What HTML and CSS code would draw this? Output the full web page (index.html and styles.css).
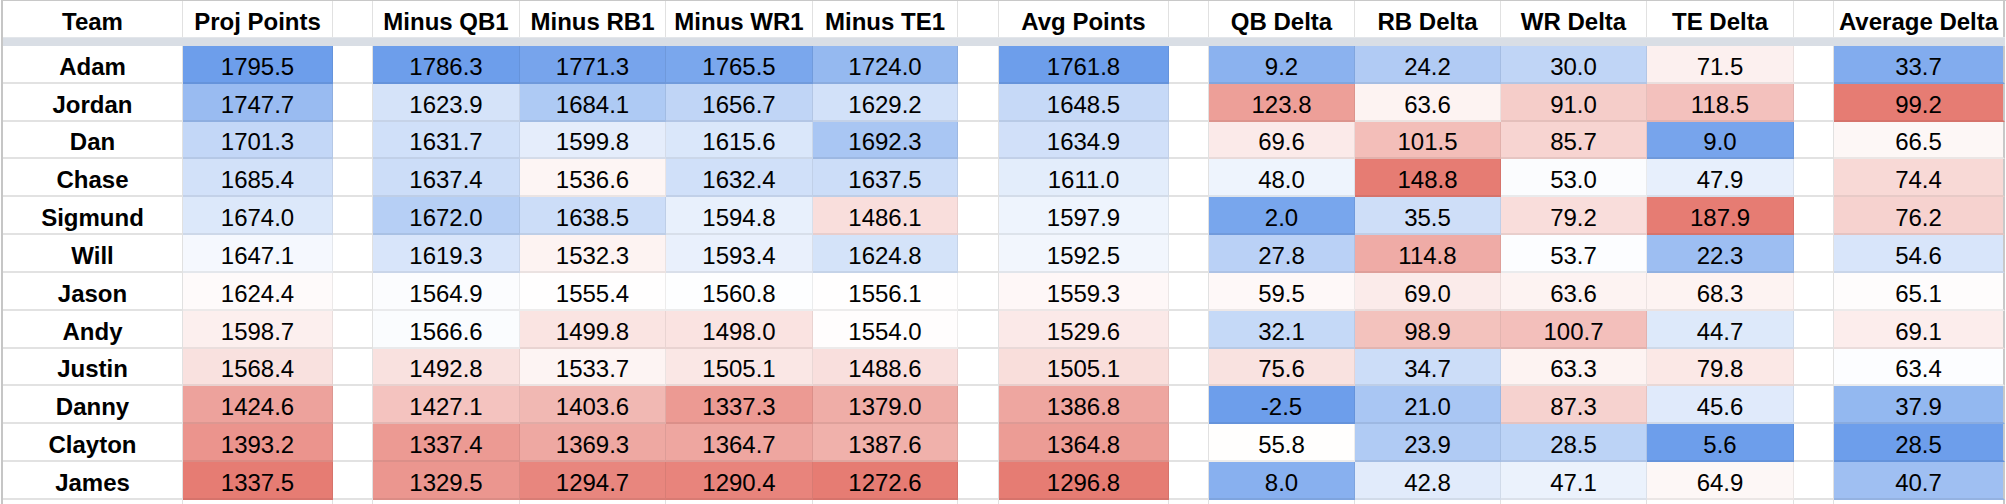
FILE: index.html
```html
<!DOCTYPE html>
<html lang="en">
<head>
<meta charset="utf-8">
<title>Team Deltas</title>
<link rel="stylesheet" href="styles.css">
</head>
<body>
<div class="sheet">
  <div class="c h">Team</div><div class="c h">Proj Points</div><div class="c h"></div><div class="c h">Minus QB1</div><div class="c h">Minus RB1</div><div class="c h">Minus WR1</div><div class="c h">Minus TE1</div><div class="c h"></div><div class="c h">Avg Points</div><div class="c h"></div><div class="c h">QB Delta</div><div class="c h">RB Delta</div><div class="c h">WR Delta</div><div class="c h">TE Delta</div><div class="c h"></div><div class="c h last">Average Delta</div>
  <div class="band"></div>

  <div class="c name">Adam</div><div class="c n" data-g="proj">1795.5</div><div class="c"></div><div class="c n" data-g="minus">1786.3</div><div class="c n" data-g="minus">1771.3</div><div class="c n" data-g="minus">1765.5</div><div class="c n" data-g="minus">1724.0</div><div class="c"></div><div class="c n" data-g="avg">1761.8</div><div class="c"></div><div class="c n" data-g="delta">9.2</div><div class="c n" data-g="delta">24.2</div><div class="c n" data-g="delta">30.0</div><div class="c n" data-g="te">71.5</div><div class="c"></div><div class="c n last" data-g="avgd">33.7</div>

  <div class="c name">Jordan</div><div class="c n" data-g="proj">1747.7</div><div class="c"></div><div class="c n" data-g="minus">1623.9</div><div class="c n" data-g="minus">1684.1</div><div class="c n" data-g="minus">1656.7</div><div class="c n" data-g="minus">1629.2</div><div class="c"></div><div class="c n" data-g="avg">1648.5</div><div class="c"></div><div class="c n" data-g="delta">123.8</div><div class="c n" data-g="delta">63.6</div><div class="c n" data-g="delta">91.0</div><div class="c n" data-g="te">118.5</div><div class="c"></div><div class="c n last" data-g="avgd">99.2</div>

  <div class="c name">Dan</div><div class="c n" data-g="proj">1701.3</div><div class="c"></div><div class="c n" data-g="minus">1631.7</div><div class="c n" data-g="minus">1599.8</div><div class="c n" data-g="minus">1615.6</div><div class="c n" data-g="minus">1692.3</div><div class="c"></div><div class="c n" data-g="avg">1634.9</div><div class="c"></div><div class="c n" data-g="delta">69.6</div><div class="c n" data-g="delta">101.5</div><div class="c n" data-g="delta">85.7</div><div class="c n" data-g="te">9.0</div><div class="c"></div><div class="c n last" data-g="avgd">66.5</div>

  <div class="c name">Chase</div><div class="c n" data-g="proj">1685.4</div><div class="c"></div><div class="c n" data-g="minus">1637.4</div><div class="c n" data-g="minus">1536.6</div><div class="c n" data-g="minus">1632.4</div><div class="c n" data-g="minus">1637.5</div><div class="c"></div><div class="c n" data-g="avg">1611.0</div><div class="c"></div><div class="c n" data-g="delta">48.0</div><div class="c n" data-g="delta">148.8</div><div class="c n" data-g="delta">53.0</div><div class="c n" data-g="te">47.9</div><div class="c"></div><div class="c n last" data-g="avgd">74.4</div>

  <div class="c name">Sigmund</div><div class="c n" data-g="proj">1674.0</div><div class="c"></div><div class="c n" data-g="minus">1672.0</div><div class="c n" data-g="minus">1638.5</div><div class="c n" data-g="minus">1594.8</div><div class="c n" data-g="minus">1486.1</div><div class="c"></div><div class="c n" data-g="avg">1597.9</div><div class="c"></div><div class="c n" data-g="delta">2.0</div><div class="c n" data-g="delta">35.5</div><div class="c n" data-g="delta">79.2</div><div class="c n" data-g="te">187.9</div><div class="c"></div><div class="c n last" data-g="avgd">76.2</div>

  <div class="c name">Will</div><div class="c n" data-g="proj">1647.1</div><div class="c"></div><div class="c n" data-g="minus">1619.3</div><div class="c n" data-g="minus">1532.3</div><div class="c n" data-g="minus">1593.4</div><div class="c n" data-g="minus">1624.8</div><div class="c"></div><div class="c n" data-g="avg">1592.5</div><div class="c"></div><div class="c n" data-g="delta">27.8</div><div class="c n" data-g="delta">114.8</div><div class="c n" data-g="delta">53.7</div><div class="c n" data-g="te">22.3</div><div class="c"></div><div class="c n last" data-g="avgd">54.6</div>

  <div class="c name">Jason</div><div class="c n" data-g="proj">1624.4</div><div class="c"></div><div class="c n" data-g="minus">1564.9</div><div class="c n" data-g="minus">1555.4</div><div class="c n" data-g="minus">1560.8</div><div class="c n" data-g="minus">1556.1</div><div class="c"></div><div class="c n" data-g="avg">1559.3</div><div class="c"></div><div class="c n" data-g="delta">59.5</div><div class="c n" data-g="delta">69.0</div><div class="c n" data-g="delta">63.6</div><div class="c n" data-g="te">68.3</div><div class="c"></div><div class="c n last" data-g="avgd">65.1</div>

  <div class="c name">Andy</div><div class="c n" data-g="proj">1598.7</div><div class="c"></div><div class="c n" data-g="minus">1566.6</div><div class="c n" data-g="minus">1499.8</div><div class="c n" data-g="minus">1498.0</div><div class="c n" data-g="minus">1554.0</div><div class="c"></div><div class="c n" data-g="avg">1529.6</div><div class="c"></div><div class="c n" data-g="delta">32.1</div><div class="c n" data-g="delta">98.9</div><div class="c n" data-g="delta">100.7</div><div class="c n" data-g="te">44.7</div><div class="c"></div><div class="c n last" data-g="avgd">69.1</div>

  <div class="c name">Justin</div><div class="c n" data-g="proj">1568.4</div><div class="c"></div><div class="c n" data-g="minus">1492.8</div><div class="c n" data-g="minus">1533.7</div><div class="c n" data-g="minus">1505.1</div><div class="c n" data-g="minus">1488.6</div><div class="c"></div><div class="c n" data-g="avg">1505.1</div><div class="c"></div><div class="c n" data-g="delta">75.6</div><div class="c n" data-g="delta">34.7</div><div class="c n" data-g="delta">63.3</div><div class="c n" data-g="te">79.8</div><div class="c"></div><div class="c n last" data-g="avgd">63.4</div>

  <div class="c name">Danny</div><div class="c n" data-g="proj">1424.6</div><div class="c"></div><div class="c n" data-g="minus">1427.1</div><div class="c n" data-g="minus">1403.6</div><div class="c n" data-g="minus">1337.3</div><div class="c n" data-g="minus">1379.0</div><div class="c"></div><div class="c n" data-g="avg">1386.8</div><div class="c"></div><div class="c n" data-g="delta">-2.5</div><div class="c n" data-g="delta">21.0</div><div class="c n" data-g="delta">87.3</div><div class="c n" data-g="te">45.6</div><div class="c"></div><div class="c n last" data-g="avgd">37.9</div>

  <div class="c name">Clayton</div><div class="c n" data-g="proj">1393.2</div><div class="c"></div><div class="c n" data-g="minus">1337.4</div><div class="c n" data-g="minus">1369.3</div><div class="c n" data-g="minus">1364.7</div><div class="c n" data-g="minus">1387.6</div><div class="c"></div><div class="c n" data-g="avg">1364.8</div><div class="c"></div><div class="c n" data-g="delta">55.8</div><div class="c n" data-g="delta">23.9</div><div class="c n" data-g="delta">28.5</div><div class="c n" data-g="te">5.6</div><div class="c"></div><div class="c n last" data-g="avgd">28.5</div>

  <div class="c name">James</div><div class="c n" data-g="proj">1337.5</div><div class="c"></div><div class="c n" data-g="minus">1329.5</div><div class="c n" data-g="minus">1294.7</div><div class="c n" data-g="minus">1290.4</div><div class="c n" data-g="minus">1272.6</div><div class="c"></div><div class="c n" data-g="avg">1296.8</div><div class="c"></div><div class="c n" data-g="delta">8.0</div><div class="c n" data-g="delta">42.8</div><div class="c n" data-g="delta">47.1</div><div class="c n" data-g="te">64.9</div><div class="c"></div><div class="c n last" data-g="avgd">40.7</div>

  <div class="c"></div><div class="c"></div><div class="c"></div><div class="c"></div><div class="c"></div><div class="c"></div><div class="c"></div><div class="c"></div><div class="c"></div><div class="c"></div><div class="c"></div><div class="c"></div><div class="c"></div><div class="c"></div><div class="c"></div><div class="c last"></div>
</div>
<script src="script.js"></script>
</body>
</html>
```

FILE: styles.css
```css
html, body {
  margin: 0;
  padding: 0;
  background: #ffffff;
}

body {
  width: 2006px;
  height: 504px;
  overflow: hidden;
}

.sheet {
  margin-left: 1px;
  border-left: 2px solid #c6c6c6;
  border-top: 1px solid #c8c8c8;
  display: grid;
  grid-template-columns: 180px 150px 40px 147px 146px 147px 145px 41px 170px 40px 146px 146px 146px 147px 40px 171px;
  grid-template-rows: 36px 9px repeat(12, 37.83px) 8px;
  font-family: "Liberation Sans", Arial, sans-serif;
  font-size: 24px;
  color: #000000;
}

.c {
  box-sizing: border-box;
  display: flex;
  align-items: flex-end;
  justify-content: center;
  border-right: 1px solid #e1e1e1;
  border-bottom: 2px solid #e2e2e2;
  padding-bottom: 2px;
  line-height: 27px;
  white-space: nowrap;
  overflow: hidden;
  background: #ffffff;
}

.c.last {
  border-right: 2px solid #c8c8c8;
}

.h {
  font-weight: bold;
  border-bottom: none;
  padding-bottom: 2px;
}

.name {
  font-weight: bold;
}

.band {
  grid-column: 1 / -1;
  background: #d9dee5;
  border-top: 1px solid #e3e6ea;
  box-sizing: border-box;
}
```

FILE: script.js
```js
(function () {
  var RED = [230, 124, 115];
  var BLUE = [109, 158, 235];
  var WHITE = [255, 255, 255];
  // colour of the lowest and highest value of each formatted range
  var groups = {
    proj: { high: BLUE, low: RED },
    minus: { high: BLUE, low: RED },
    avg: { high: BLUE, low: RED },
    delta: { high: RED, low: BLUE },
    te: { high: RED, low: BLUE },
    avgd: { high: RED, low: BLUE }
  };

  function lerp(a, b, t) {
    return [0, 1, 2].map(function (i) {
      return Math.round(a[i] + (b[i] - a[i]) * t);
    });
  }

  function median(vals) {
    var s = vals.slice().sort(function (a, b) { return a - b; });
    var pos = (s.length - 1) * 0.5;
    var lo = Math.floor(pos), hi = Math.ceil(pos);
    return s[lo] + (s[hi] - s[lo]) * (pos - lo);
  }

  Object.keys(groups).forEach(function (g) {
    var cells = Array.prototype.slice.call(document.querySelectorAll('[data-g="' + g + '"]'));
    var vals = cells.map(function (c) { return parseFloat(c.textContent); });
    var min = Math.min.apply(null, vals);
    var max = Math.max.apply(null, vals);
    var mid = median(vals);
    cells.forEach(function (c, i) {
      var v = vals[i];
      var col;
      if (v <= mid) {
        col = lerp(groups[g].low, WHITE, mid === min ? 1 : (v - min) / (mid - min));
      } else {
        col = lerp(WHITE, groups[g].high, (v - mid) / (max - mid));
      }
      var edge = col.map(function (x) { return Math.round(x * 0.93); });
      c.style.backgroundColor = 'rgb(' + col.join(',') + ')';
      c.style.borderBottomColor = 'rgb(' + edge.join(',') + ')';
      if (!c.classList.contains('last')) {
        c.style.borderRightColor = 'rgb(' + edge.join(',') + ')';
      }
    });
  });
})();
```
